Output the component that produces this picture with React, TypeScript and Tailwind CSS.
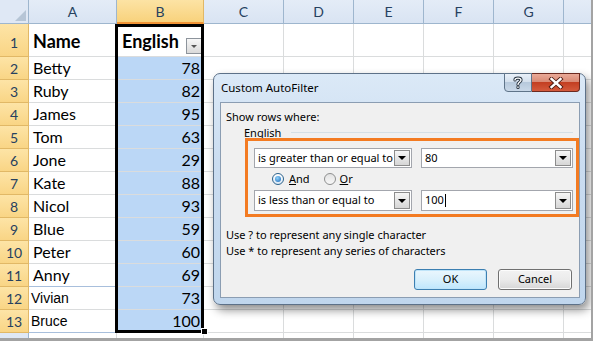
import React from "react";

const cols = [
  { key: "A", w: "w-[88px]" },
  { key: "B", w: "w-[87px]" },
  { key: "C", w: "w-[80px]" },
  { key: "D", w: "w-[70px]" },
  { key: "E", w: "w-[70px]" },
  { key: "F", w: "w-[70px]" },
  { key: "G", w: "w-[70px]" },
];

const scores: [number, string, number][] = [
  [2, "Betty", 78],
  [3, "Ruby", 82],
  [4, "James", 95],
  [5, "Tom", 63],
  [6, "Jone", 29],
  [7, "Kate", 88],
  [8, "Nicol", 93],
  [9, "Blue", 59],
  [10, "Peter", 60],
  [11, "Anny", 69],
  [12, "Vivian", 73],
  [13, "Bruce", 100],
];

function RowHead({ n, tall }: { n: number | string; tall?: boolean }) {
  return (
    <div
      className={`w-[29px] shrink-0 flex items-center justify-center border-r border-b border-[#e1b866] bg-gradient-to-b from-[#fde4a6] to-[#f9d585] text-[14px] text-[#27415f] ${
        tall ? "pt-[4px]" : ""
      }`}
    >
      {n}
    </div>
  );
}

function Blank({ w }: { w: string }) {
  return <div className={`${w} shrink-0 border-r border-b border-[#dadcdd]`} />;
}

function DropButton() {
  return (
    <div className="w-[16px] shrink-0 flex items-center justify-center border border-[#8c8c8c] bg-gradient-to-b from-[#f6f6f6] to-[#d6d6d6]">
      <div className="w-0 h-0 border-l-[4px] border-r-[4px] border-t-[4px] border-l-transparent border-r-transparent border-t-black" />
    </div>
  );
}

function Combo({ w, h, children }: { w: string; h: string; children: React.ReactNode }) {
  return (
    <div className={`${w} ${h} flex border border-[#a3a6ad] bg-white p-[1px]`}>
      <div className="flex-1 flex items-center pl-[2px] whitespace-nowrap overflow-hidden text-black">{children}</div>
      <DropButton />
    </div>
  );
}

function Radio({ on }: { on?: boolean }) {
  return on ? (
    <div className="w-[12px] h-[12px] rounded-full border border-[#2c628b] bg-gradient-to-b from-[#ffffff] to-[#dbe9f6] flex items-center justify-center">
      <div className="w-[6px] h-[6px] rounded-full bg-[radial-gradient(circle_at_40%_35%,#8fd2fb,#1a67b7)]" />
    </div>
  ) : (
    <div className="w-[12px] h-[12px] rounded-full border border-[#8e8f8f] bg-gradient-to-b from-[#e2e2e2] to-[#f8f8f8]" />
  );
}

function TitleButtons() {
  return (
    <div className="ml-auto mr-[5px] -mt-px flex shrink-0 h-[19px]">
      <div className="w-[28px] h-[19px] rounded-bl-[4px] border border-[#5f7489] bg-[#c2d2e4] bg-[linear-gradient(180deg,#e9f0f8_0%,#d4e0ed_45%,#b7c9dc_50%,#c9d8e8_100%)] flex items-center justify-center">
        <svg width="10" height="13" viewBox="0 0 10 13">
          <path
            d="M2 4 C2 1.5 8 1.5 8 4 C8 6 5 6 5 8.5 M5 11 L5 11.5"
            fill="none"
            stroke="#26323f"
            strokeWidth="3.2"
            strokeLinecap="round"
          />
          <path
            d="M2 4 C2 1.5 8 1.5 8 4 C8 6 5 6 5 8.5 M5 11 L5 11.5"
            fill="none"
            stroke="#ffffff"
            strokeWidth="1.4"
            strokeLinecap="round"
          />
        </svg>
      </div>
      <div className="w-[48px] h-[19px] rounded-br-[4px] border-t border-r border-b border-[#6b2a20] bg-[#c9452d] bg-[linear-gradient(180deg,#e9a997_0%,#d98b76_45%,#c33f22_50%,#d45a3c_100%)] flex items-center justify-center">
        <svg width="16" height="12" viewBox="0 0 16 12">
          <path d="M3.5 2 L12.5 10 M12.5 2 L3.5 10" stroke="#4b1a12" strokeWidth="4.2" strokeLinecap="square" />
          <path d="M3.5 2 L12.5 10 M12.5 2 L3.5 10" stroke="#ffffff" strokeWidth="2.4" strokeLinecap="square" />
        </svg>
      </div>
    </div>
  );
}

function Dialog() {
  return (
    <div className="absolute left-[213px] top-[73px] w-[373px] h-[232px] rounded-[7px] border border-[#5d7188] bg-[linear-gradient(180deg,#dbe9f7_0%,#cadcf0_40%,#c0d6ed_100%)] shadow-[3px_5px_10px_rgba(0,0,0,0.45)] font-['Noto_Sans',sans-serif] text-[11px] text-black">
      <div className="h-[28px] flex items-start">
        <div className="h-full flex items-center pl-[7px] text-[11.5px]">Custom AutoFilter</div>
        <TitleButtons />
      </div>
      <div className="ml-[6px] w-[360px] h-[196px] border border-[#8b9db2] bg-[#f0f0f0] flex flex-col pl-[5px]">
        <div className="mt-[7px] leading-[14px]">Show rows where:</div>
        <div className="mt-[3px] h-[11px] leading-[11px] flex items-center pl-[18px]">
          <span>English</span>
          <div className="flex-1 h-px bg-[#d5dfe5] ml-[10px] mr-[6px]" />
        </div>
        <div className="ml-[19px] w-[334px] border-[3px] border-[#f37b22] flex flex-col pt-[7px] pb-[3px] pl-[6px]">
          <div className="flex gap-[9px]">
            <Combo w="w-[158px]" h="h-[20px]">is greater than or equal to</Combo>
            <Combo w="w-[152px]" h="h-[20px]">80</Combo>
          </div>
          <div className="h-[22px] flex items-center pl-[18px]">
            <Radio on />
            <span className="ml-[5px]">
              <span className="underline">A</span>nd
            </span>
            <span className="ml-[14px]">
              <Radio />
            </span>
            <span className="ml-[4px]">
              <span className="underline">O</span>r
            </span>
          </div>
          <div className="flex gap-[9px]">
            <Combo w="w-[158px]" h="h-[21px]">is less than or equal to</Combo>
            <Combo w="w-[152px]" h="h-[21px]">
              100
              <span className="inline-block w-px h-[13px] bg-black ml-[1px]" />
            </Combo>
          </div>
        </div>
        <div className="mt-[10px] leading-[16px]">Use ? to represent any single character</div>
        <div className="leading-[16px]">Use * to represent any series of characters</div>
        <div className="mt-[10px] flex justify-end gap-[11px] pr-[7px]">
          <button className="w-[73px] h-[21px] rounded-[3px] border border-[#3c7fb1] bg-gradient-to-b from-[#eaf6fd] via-[#d9f0fc] to-[#bee6fd] shadow-[inset_0_0_0_1px_#bfe4f9]">
            OK
          </button>
          <button className="w-[74px] h-[21px] rounded-[3px] border border-[#707070] bg-gradient-to-b from-[#f2f2f2] via-[#ebebeb] to-[#d6d6d6] shadow-[inset_0_0_0_1px_#fcfcfc]">
            Cancel
          </button>
        </div>
      </div>
    </div>
  );
}

export default function App() {
  return (
    <div className="relative w-[593px] h-[341px] overflow-hidden bg-white border-r-2 border-b-[3px] border-[#a3a3a3] font-['Lato',sans-serif] text-black">
      {/* column headers */}
      <div className="flex h-[24px]">
        <div className="relative w-[29px] shrink-0 border-r border-b border-[#9eb6ce] bg-[#dfe8f5]">
          <svg className="absolute right-[2px] bottom-[2px]" width="11" height="11" viewBox="0 0 11 11">
            <path d="M11 0 L11 11 L0 11 Z" fill="#b6c5d6" />
          </svg>
        </div>
        {cols.map((c) =>
          c.key === "B" ? (
            <div
              key={c.key}
              className={`${c.w} shrink-0 flex items-center justify-center border-r border-[#e1b866] border-b-[2px] border-b-[#f29436] bg-gradient-to-b from-[#fce3a4] to-[#f8d27c] text-[14px] text-[#27415f]`}
            >
              {c.key}
            </div>
          ) : (
            <div
              key={c.key}
              className={`${c.w} shrink-0 flex items-center justify-center border-r border-b border-[#9eb6ce] bg-gradient-to-b from-[#e4ecf7] to-[#d9e4f3] text-[14px] text-[#27415f]`}
            >
              {c.key}
            </div>
          )
        )}
        <div className="flex-1 border-b border-[#9eb6ce] bg-gradient-to-b from-[#e4ecf7] to-[#d9e4f3]" />
      </div>

      {/* row 1 */}
      <div className="flex h-[33px]">
        <RowHead n={1} tall />
        <div className="w-[88px] shrink-0 flex items-end pb-[1px] pl-[4px] border-r border-b border-[#dadcdd] text-[18px] font-bold">
          Name
        </div>
        <div className="relative w-[87px] shrink-0 flex items-end pb-[1px] pl-[5px] border-r border-b border-[#dadcdd] text-[18px] font-bold">
          English
          <div className="absolute right-[1px] bottom-[2px] w-[16px] h-[16px] border border-[#8d949c] bg-gradient-to-b from-[#f7f7f7] to-[#dadada] flex items-center justify-center">
            <div className="w-0 h-0 border-l-[3px] border-r-[3px] border-t-[3px] border-l-transparent border-r-transparent border-t-[#555]" />
          </div>
        </div>
        {cols.slice(2).map((c) => (
          <Blank key={c.key} w={c.w} />
        ))}
        <div className="flex-1 border-b border-[#dadcdd]" />
      </div>

      {/* data rows */}
      {scores.map(([n, name, score]) => {
        const late = n >= 12;
        return (
          <div key={n} className="flex h-[23px]">
            <RowHead n={n} />
            <div
              className={`w-[88px] shrink-0 flex items-center border-r border-b ${
                n === 11 || n === 13 ? "border-b-[#a8bfdc]" : "border-b-[#dadcdd]"
              } border-r-[#dadcdd] ${
                late
                  ? "pl-[2px] font-['Liberation_Sans',sans-serif] text-[14px]"
                  : "pl-[4px] text-[16px]"
              }`}
            >
              {name}
            </div>
            <div className="w-[87px] shrink-0 flex items-center justify-end pr-[3px] border-r border-b border-[#dadcdd] bg-[#bbd7f6] text-[16px]">
              {score}
            </div>
            {cols.slice(2).map((c) => (
              <Blank key={c.key} w={c.w} />
            ))}
            <div className="flex-1 border-b border-[#dadcdd]" />
          </div>
        );
      })}

      {/* partial row 14 */}
      <div className="flex h-[23px]">
        <div className="w-[29px] shrink-0 border-r border-[#9eb6ce] bg-[#dfe8f5]" />
        {cols.map((c) => (
          <Blank key={c.key} w={c.w} />
        ))}
      </div>

      {/* selection */}
      <div className="absolute left-[115px] top-[24px] w-[89px] h-[309px] border-[3px] border-black pointer-events-none" />
      <div className="absolute left-[201px] top-[328px] w-[7px] h-[7px] bg-black border border-white" />

      <Dialog />
    </div>
  );
}
